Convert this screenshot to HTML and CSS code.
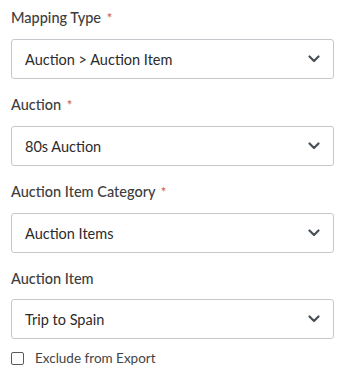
FILE: index.html
```html
<!DOCTYPE html>
<html>
<head>
<meta charset="utf-8">
<link rel="stylesheet" href="styles.css">
</head>
<body>
<form class="form">
  <div class="field">
    <div class="label">Mapping Type <span class="req">*</span></div>
    <div class="select"><span class="value">Auction &gt; Auction Item</span>
      <svg class="chev" width="12" height="8" viewBox="0 0 12 8"><path d="M1.5 1.5 L6 6 L10.5 1.5" fill="none" stroke="#4a5058" stroke-width="2.2" stroke-linecap="round" stroke-linejoin="round"/></svg></div>
  </div>
  <div class="field">
    <div class="label">Auction <span class="req">*</span></div>
    <div class="select"><span class="value">80s Auction</span>
      <svg class="chev" width="12" height="8" viewBox="0 0 12 8"><path d="M1.5 1.5 L6 6 L10.5 1.5" fill="none" stroke="#4a5058" stroke-width="2.2" stroke-linecap="round" stroke-linejoin="round"/></svg></div>
  </div>
  <div class="field">
    <div class="label">Auction Item Category <span class="req">*</span></div>
    <div class="select"><span class="value">Auction Items</span>
      <svg class="chev" width="12" height="8" viewBox="0 0 12 8"><path d="M1.5 1.5 L6 6 L10.5 1.5" fill="none" stroke="#4a5058" stroke-width="2.2" stroke-linecap="round" stroke-linejoin="round"/></svg></div>
  </div>
  <div class="field last">
    <div class="label">Auction Item</div>
    <div class="select"><span class="value">Trip to Spain</span>
      <svg class="chev" width="12" height="8" viewBox="0 0 12 8"><path d="M1.5 1.5 L6 6 L10.5 1.5" fill="none" stroke="#4a5058" stroke-width="2.2" stroke-linecap="round" stroke-linejoin="round"/></svg></div>
  </div>
  <label class="check"><span class="box"></span><span>Exclude from Export</span></label>
</form>
</body>
</html>
```
FILE: styles.css
```css
html, body { margin: 0; padding: 0; background: #fff; }
body { font-family: Lato, "Open Sans", sans-serif; color: #333; }
.form { padding: 8px 12px 0 11px; display: flex; flex-direction: column; }
.field { display: flex; flex-direction: column; gap: 11px; margin-bottom: 16px; }
.field.last { margin-bottom: 11px; }
.label { font-size: 14.5px; line-height: 19px; color: #3d3d3d; font-weight: 500; }
.req { color: #d9534f; margin-left: 2px; font-size: 13px; }
.select { height: 38px; border: 1px solid #c4c8cc; border-radius: 3px; display: flex; align-items: center; justify-content: space-between; padding: 0 13px; }
.value { font-size: 14.5px; color: #2b2b2b; }
.chev { display: block; }
.check { display: flex; align-items: center; gap: 11px; font-size: 13.5px; color: #444; }
.box { width: 11px; height: 11px; border: 1px solid #5a5a5a; border-radius: 2px; }
```
